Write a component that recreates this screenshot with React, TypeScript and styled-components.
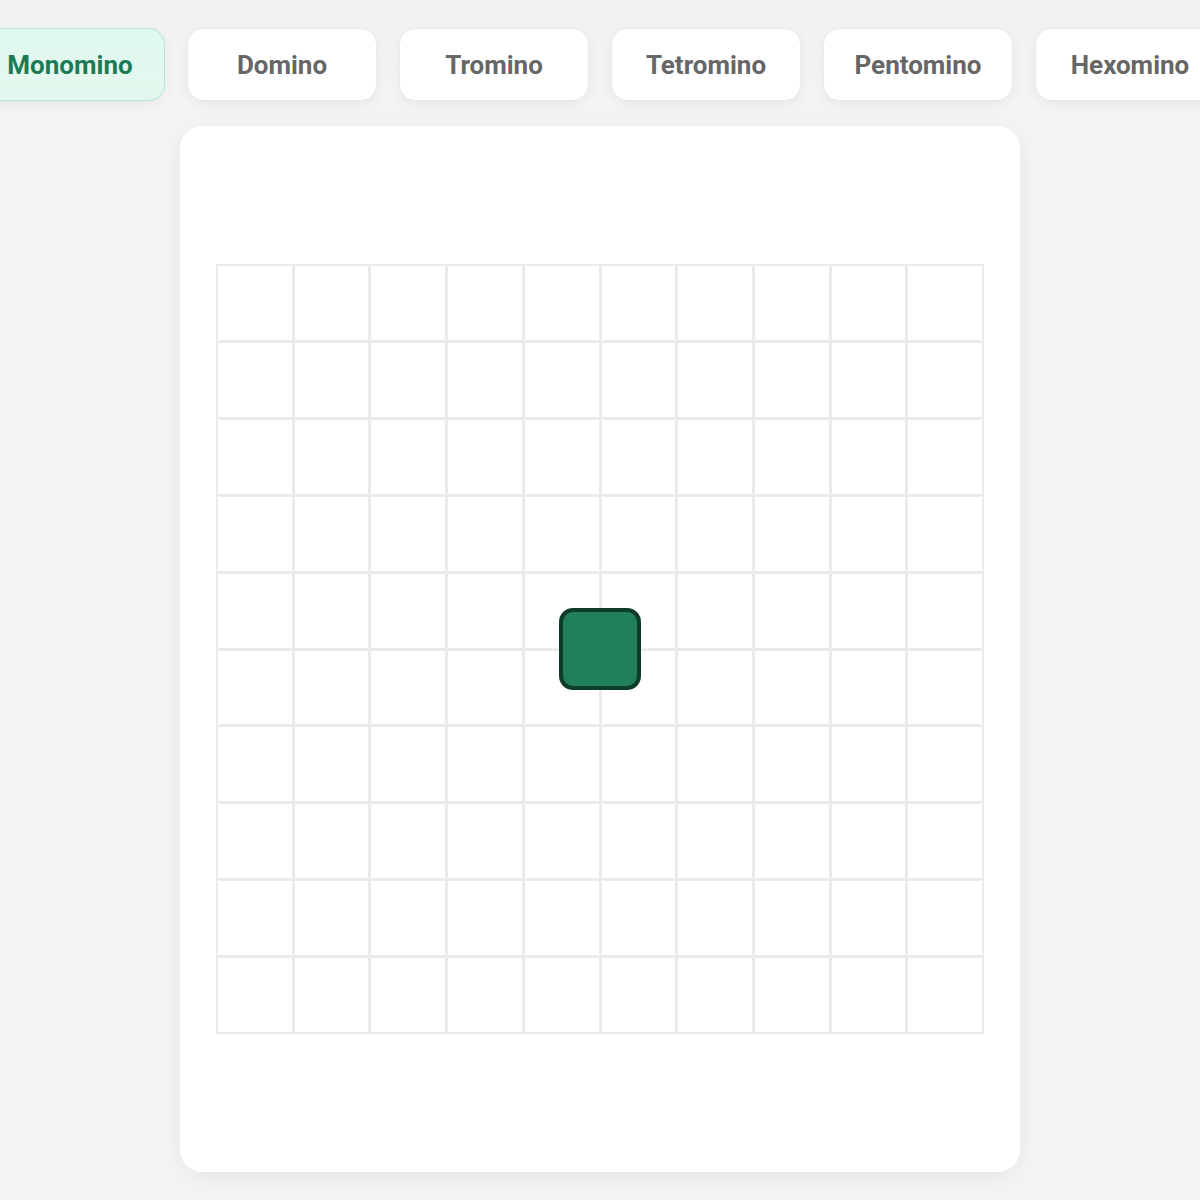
import React from "react";
import styled, { createGlobalStyle, css } from "styled-components";

const Global = createGlobalStyle`
  html, body {
    margin: 0;
    padding: 0;
    background: #f5f5f4;
    font-family: Roboto, "Liberation Sans", Arial, sans-serif;
  }
  #root {
    min-height: 1200px;
    overflow: hidden;
  }
`;

const Page = styled.div`
  width: 1200px;
  height: 1200px;
  display: flex;
  flex-direction: column;
  align-items: center;
  background: linear-gradient(#f2f2f2 0px, #f5f5f4 140px);
  overflow: hidden;
`;

const TabBar = styled.nav`
  display: flex;
  justify-content: center;
  gap: 22px;
  padding-top: 28px;
  width: 1200px;
`;

const Tab = styled.button<{ $active?: boolean }>`
  flex: 0 0 190px;
  height: 73px;
  border-radius: 16px;
  border: 1px solid #e9e9e9;
  background: #ffffff;
  color: #666666;
  font-family: Roboto, "Liberation Sans", Arial, sans-serif;
  font-size: 26px;
  font-weight: 700;
  box-shadow: 0 4px 14px rgba(0, 0, 0, 0.05);
  cursor: pointer;
  padding: 0;
  ${(p) =>
    p.$active &&
    css`
      background: linear-gradient(180deg, #dff9ee 0%, #e5f7ee 100%);
      border-color: #b5e5d0;
      color: #1c7a55;
    `}
`;

const Card = styled.section`
  margin-top: 25px;
  width: 840px;
  height: 1046px;
  box-sizing: border-box;
  background: #ffffff;
  border-radius: 22px;
  box-shadow: 0 6px 28px rgba(0, 0, 0, 0.07);
  display: flex;
  align-items: center;
  justify-content: center;
`;

const Board = styled.div`
  position: relative;
  display: grid;
  grid-template-columns: repeat(10, 73.7px);
  grid-template-rows: repeat(10, 73.9px);
  gap: 3px;
  padding: 2px;
  background: #ebebeb;
`;

const Cell = styled.div`
  background: #ffffff;
`;

const Piece = styled.div`
  position: absolute;
  left: 50%;
  top: 50%;
  width: 82px;
  height: 82px;
  transform: translate(-50%, -50%);
  box-sizing: border-box;
  background: #217f5c;
  border: 4px solid #0b3d29;
  border-radius: 14px;
`;

const TABS = ["Monomino", "Domino", "Tromino", "Tetromino", "Pentomino", "Hexomino"];

export default function App() {
  return (
    <>
      <Global />
      <Page>
        <TabBar>
          {TABS.map((t, i) => (
            <Tab key={t} $active={i === 0}>
              {t}
            </Tab>
          ))}
        </TabBar>
        <Card>
          <Board>
            {Array.from({ length: 100 }, (_, i) => (
              <Cell key={i} />
            ))}
            <Piece />
          </Board>
        </Card>
      </Page>
    </>
  );
}
